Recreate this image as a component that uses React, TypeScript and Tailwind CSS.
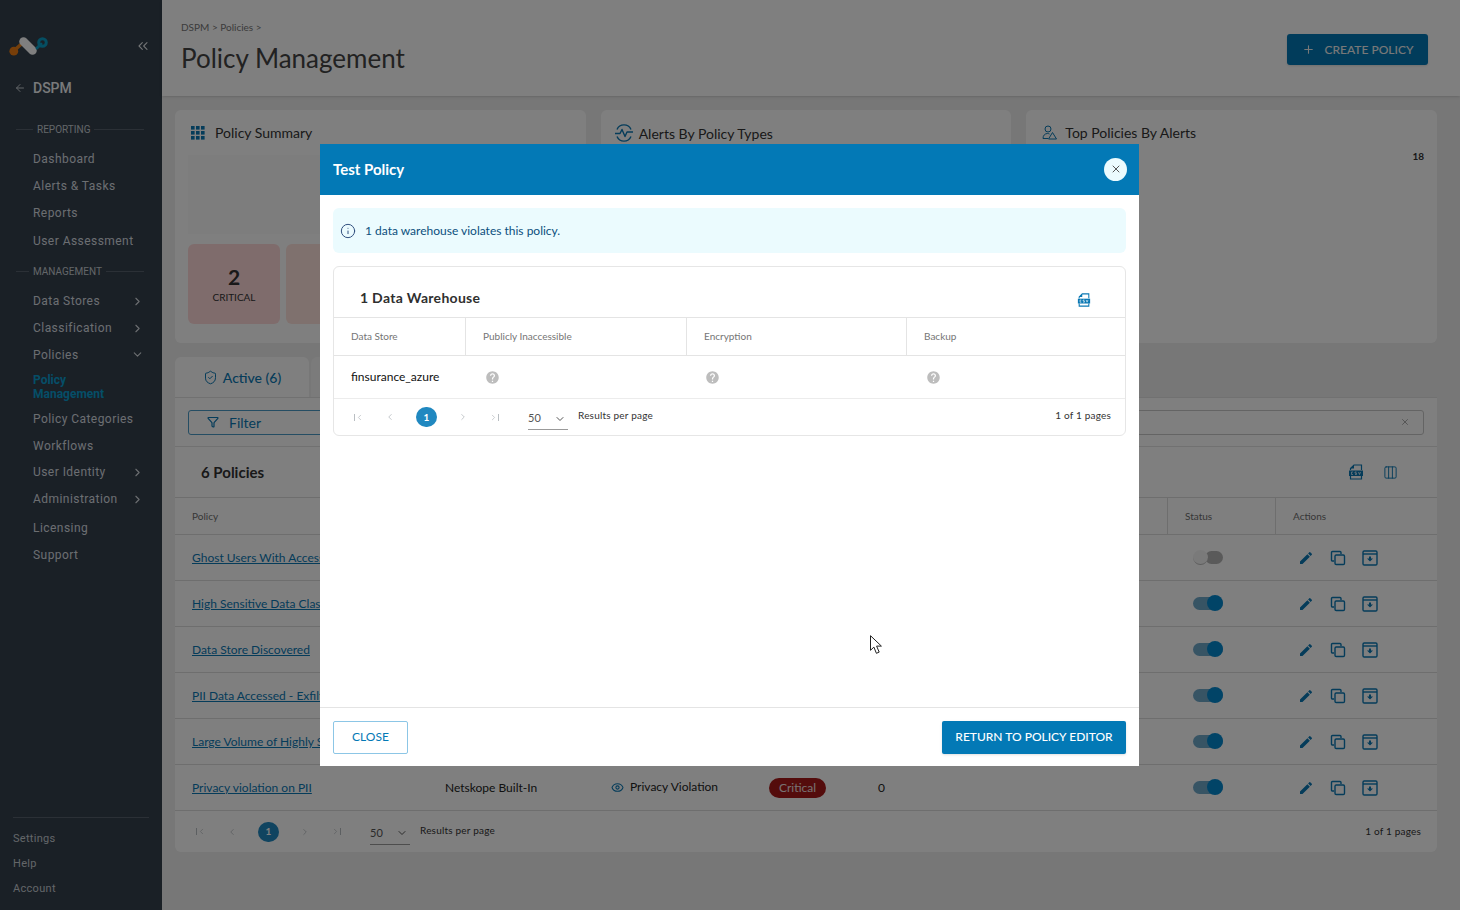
import { ArrowLeft, ChevronDown, ChevronLeft, ChevronRight, ChevronsLeft, Columns3, Eye, Filter, Info, Plus, ShieldCheck, X } from 'lucide-react'
import { MdEdit, MdHelp } from 'react-icons/md'

const policies = [
  { name: 'Ghost Users With Access to Sensitive Data', on: false, type: 'Access Violation', severity: 'High', alerts: '0' },
  { name: 'High Sensitive Data Classified in Public Store', on: true, type: 'Data Exposure', severity: 'High', alerts: '0' },
  { name: 'Data Store Discovered', on: true, type: 'Discovery', severity: 'Low', alerts: '0' },
  { name: 'PII Data Accessed - Exfiltration Risk', on: true, type: 'Exfiltration', severity: 'Critical', alerts: '0' },
  { name: 'Large Volume of Highly Sensitive Data', on: true, type: 'Data Exposure', severity: 'High', alerts: '0' },
  { name: 'Privacy violation on PII', on: true, type: 'Privacy Violation', severity: 'Critical', alerts: '0' },
]

function Logo() {
  return (
    <svg width="40" height="24" viewBox="0 0 40 24" fill="none">
      <path d="M4 17.5 L13 9.5" stroke="#e8801a" strokeWidth="3.5" strokeLinecap="round" />
      <circle cx="4.8" cy="17.2" r="4.4" fill="#ef7d12" />
      <path d="M14.5 7.5 L23.5 16.5" stroke="#ffffff" strokeWidth="8.5" strokeLinecap="round" />
      <path d="M28 14 L32 10" stroke="#0a9cc4" strokeWidth="3" strokeLinecap="round" />
      <circle cx="33.5" cy="8.5" r="3.8" stroke="#0a9cc4" strokeWidth="3" />
    </svg>
  )
}

function NavItem({ label, icon }: { label: string; icon?: 'right' | 'down' }) {
  return (
    <div className="flex h-[27px] shrink-0 items-center justify-between pl-[33px] pr-[18px] text-[12px] tracking-[0.45px] text-[#d8dde2]">
      <span>{label}</span>
      {icon === 'right' && <ChevronRight className="mt-[2px] h-[13px] w-[13px]" />}
      {icon === 'down' && <ChevronDown className="h-[13px] w-[13px]" />}
    </div>
  )
}

function NavHeading({ label, left, className }: { label: string; left: string; className: string }) {
  return (
    <div className={`flex h-[12px] shrink-0 items-center pl-[16px] pr-[18px] text-[10px] text-[#c6ccd2] ${className}`}>
      <span className={`h-px bg-[#56606c] ${left}`} />
      <span className="px-[4px]">{label}</span>
      <span className="h-px flex-1 bg-[#56606c]" />
    </div>
  )
}

function Sidebar() {
  return (
    <aside className="flex h-full w-[162px] shrink-0 flex-col bg-[#34404c] pt-[34px] pb-[9px] font-['Roboto',sans-serif]">
      <div className="flex h-[24px] shrink-0 items-center justify-between pl-[9px] pr-[11px]">
        <Logo />
        <ChevronsLeft className="h-[16px] w-[16px] text-[#e5e8eb]" strokeWidth={1.6} />
      </div>
      <div className="mt-[20px] flex h-[20px] shrink-0 items-center gap-[7px] pl-[14px] text-[14px] font-medium text-[#f2f4f6]">
        <ArrowLeft className="h-[12px] w-[12px] text-[#c6ccd2]" />
        <span>DSPM</span>
      </div>
      <NavHeading label="REPORTING" left="w-[17px]" className="mt-[25px]" />
      <div className="mt-[10px]">
        <NavItem label="Dashboard" />
        <NavItem label="Alerts & Tasks" />
        <NavItem label="Reports" />
        <div className="mt-px">
          <NavItem label="User Assessment" />
        </div>
      </div>
      <NavHeading label="MANAGEMENT" left="w-[13px]" className="mt-[11px]" />
      <div className="mt-[10px]">
        <NavItem label="Data Stores" icon="right" />
        <NavItem label="Classification" icon="right" />
        <NavItem label="Policies" icon="down" />
      </div>
      <div className="mt-[5px] w-[100px] pl-[33px] text-[12px] leading-[14px] font-bold text-[#0a9ccf]">Policy Management</div>
      <div className="mt-[4px]">
        <NavItem label="Policy Categories" />
        <NavItem label="Workflows" />
      </div>
      <div className="-mt-px">
        <NavItem label="User Identity" icon="right" />
        <NavItem label="Administration" icon="right" />
      </div>
      <div className="mt-[2px]">
        <NavItem label="Licensing" />
        <NavItem label="Support" />
      </div>
      <div className="mx-[13px] mt-auto h-px bg-[#56606c]" />
      <div className="mt-[9px] flex flex-col gap-px pl-[13px] text-[11px] tracking-[0.3px] text-[#c6ccd2]">
        <div className="flex h-[24px] items-center">Settings</div>
        <div className="flex h-[24px] items-center">Help</div>
        <div className="flex h-[24px] items-center">Account</div>
      </div>
    </aside>
  )
}

function GridIcon() {
  return (
    <svg width="14" height="14" viewBox="0 0 14 14" fill="#0a78b4">
      {[0, 5, 10].map((y) =>
        [0, 5, 10].map((x) => <rect key={`${x}-${y}`} x={x} y={y} width="3.6" height="3.6" />)
      )}
    </svg>
  )
}

function PulseIcon() {
  return (
    <svg width="20" height="18" viewBox="0 0 20 18" fill="none" stroke="#0a78b4" strokeWidth="1.4">
      <path d="M3 5.5A7.6 7.6 0 0 1 17 5.5M3 12.5A7.6 7.6 0 0 0 17 12.5" />
      <path d="M1 9.5h5l2-4 3 7 2-4.5h6" strokeLinejoin="round" />
    </svg>
  )
}

function AlertUserIcon() {
  return (
    <svg width="15" height="15" viewBox="0 0 15 15" fill="none" stroke="#0a78b4" strokeWidth="1">
      <circle cx="6" cy="4" r="3" />
      <path d="M1 13.5c0-3.2 2-5 4.5-5 .8 0 1.4.2 2 .5M1 13.5h5" />
      <path d="M10.5 7.5l4 6.5h-8z" strokeLinejoin="round" />
    </svg>
  )
}

function CsvIcon({ size = 16 }: { size?: number }) {
  return (
    <svg width={size} height={size} viewBox="0 0 16 16" fill="none">
      <path d="M2.5 6V4.5L6 1h7.5v5M2.5 12v3h11v-3" stroke="#0a78b4" strokeWidth="1.2" />
      <path d="M2 4.5h4V1z" fill="#0a78b4" />
      <rect x="1" y="6.5" width="14" height="5.5" fill="#0a78b4" />
      <path d="M5 8h-1.5v2.5H5M8.5 8H7v1.2h1.5v1.3H7M10.5 8l1 2.5 1-2.5" stroke="#ffffff" strokeWidth=".7" />
    </svg>
  )
}

function CopyIcon() {
  return (
    <svg width="16" height="16" viewBox="0 0 16 16" fill="none" stroke="#0a78b4" strokeWidth="1.4">
      <path d="M4 11H2.5a1 1 0 0 1-1-1V2.5a1 1 0 0 1 1-1H10a1 1 0 0 1 1 1V4" />
      <rect x="5" y="5" width="9.5" height="9.5" rx="1.2" />
    </svg>
  )
}

function ArchiveIcon() {
  return (
    <svg width="16" height="16" viewBox="0 0 16 16" fill="none" stroke="#0a78b4" strokeWidth="1.4">
      <rect x="1" y="1" width="14" height="14" rx="1.2" />
      <path d="M1 4h14" />
      <path d="M5 8.5h2V6.5h2v2h2L8 11.5z" fill="#0a78b4" stroke="none" />
    </svg>
  )
}

function Toggle({ on }: { on: boolean }) {
  if (!on) {
    return (
      <div className="relative h-[13px] w-[30px]">
        <div className="absolute top-0 right-0 h-[13px] w-[18px] rounded-full bg-[#b4b4b4]" />
        <div className="absolute top-[-1px] left-0 h-[15px] w-[15px] rounded-full border-b border-[#bbbbbb] bg-[#f4f4f4]" />
      </div>
    )
  }
  return (
    <div className="relative h-[13px] w-[30px] rounded-full bg-[#6fa8c9]">
      <div className="absolute top-[-2px] right-0 h-[16px] w-[16px] rounded-full bg-[#0288cf]" />
    </div>
  )
}

function Pager({ gap }: { gap: string }) {
  return (
    <div className="flex items-center text-[#b9bec2]">
      <div className={`flex items-center ${gap}`}>
        <span className="flex w-[10px] items-center justify-center">
          <span className="h-[7px] w-px bg-[#b9bec2]" />
          <ChevronLeft className="h-[9px] w-[9px]" />
        </span>
        <ChevronLeft className="h-[10px] w-[10px]" />
        <span className="flex h-[20px] w-[21px] items-center justify-center rounded-full bg-[#2088c0] text-[10px] font-bold text-white">1</span>
        <ChevronRight className="h-[10px] w-[10px]" />
        <span className="flex w-[10px] items-center justify-center">
          <ChevronRight className="h-[9px] w-[9px]" />
          <span className="h-[7px] w-px bg-[#b9bec2]" />
        </span>
      </div>
    </div>
  )
}

function PageSize() {
  return (
    <>
      <div className="ml-[29px] flex h-[26px] w-[40px] items-center justify-between border-b border-[#9a9a9a] pt-[4px] text-[11px] text-[#555555]">
        <span>50</span>
        <ChevronDown className="mr-[2px] h-[12px] w-[12px]" />
      </div>
      <span className="ml-[10px] mb-[3px] text-[10px] tracking-[0.2px] text-[#333333]">Results per page</span>
    </>
  )
}

function PolicyTable() {
  return (
    <div>
      <div className="flex h-[38px] border-y border-[#dddddd] text-[10px] text-[#6e6e6e]">
        <div className="flex w-[253px] items-center pl-[17px]">Policy</div>
        <div className="flex w-[183px] items-center border-l border-[#dddddd] pl-[17px]">Type</div>
        <div className="flex w-[141px] items-center border-l border-[#dddddd] pl-[17px]">Policy Type</div>
        <div className="flex w-[109px] items-center border-l border-[#dddddd] pl-[17px]">Severity</div>
        <div className="flex flex-1 items-center border-l border-[#dddddd] pl-[17px]">Alerts</div>
        <div className="flex w-[108px] items-center border-l border-[#dddddd] pl-[17px]">Status</div>
        <div className="flex w-[162px] items-center border-l border-[#dddddd] pl-[17px]">Actions</div>
      </div>
      {policies.map((policy) => (
        <div key={policy.name} className="flex h-[46px] items-center border-b border-[#dddddd] text-[12px]">
          <div className="w-[253px] truncate pl-[17px] text-[#0a78b4] underline">{policy.name}</div>
          <div className="w-[183px] pl-[17px] text-[#222222]">Netskope Built-In</div>
          <div className="flex w-[141px] items-center gap-[6px] text-[#222222]">
            <Eye className="h-[13px] w-[13px] text-[#0a78b4]" />
            <span className="mb-[2px]">{policy.type}</span>
          </div>
          <div className="w-[109px] pl-[17px]">
            <span className="inline-block rounded-full bg-[#a81818] px-[10px] py-[1px] text-[#f0e2e2]">{policy.severity}</span>
          </div>
          <div className="flex-1 pl-[17px] text-[#222222]">{policy.alerts}</div>
          <div className="flex w-[108px] pl-[26px]">
            <Toggle on={policy.on} />
          </div>
          <div className="flex w-[162px] items-center gap-[16px] pl-[23px]">
            <MdEdit className="h-[16px] w-[16px] text-[#0a78b4]" />
            <CopyIcon />
            <ArchiveIcon />
          </div>
        </div>
      ))}
    </div>
  )
}

function Main() {
  return (
    <main className="flex h-full flex-1 flex-col bg-[#eeeeee] font-['Lato',sans-serif]">
      <header className="relative flex h-[96px] shrink-0 items-start justify-between bg-white pl-[19px] pr-[32px] shadow-sm">
        <div>
          <div className="mt-[21px] text-[10px] leading-[12px] text-[#777777]">DSPM &gt; Policies &gt;</div>
          <h1 className="mt-[9px] text-[26px] leading-[32px] text-[#444444]">Policy Management</h1>
        </div>
        <button className="mt-[34px] flex h-[31px] w-[141px] items-center justify-center gap-[10px] rounded-[3px] bg-[#0279b6] text-[12px] font-medium text-[#f0f0f0] shadow">
          <Plus className="h-[13px] w-[13px]" />
          CREATE POLICY
        </button>
      </header>
      <div className="flex flex-1 flex-col pl-[13px] pr-[23px] pt-[14px]">
        <section className="flex h-[233px] shrink-0 gap-[15px]">
          <div className="flex-1 rounded-[6px] bg-white px-[13px] pt-[14px]">
            <div className="flex items-center gap-[10px] text-[14px] leading-[17px] text-[#333333]">
              <span className="ml-[3px]"><GridIcon /></span>
              Policy Summary
            </div>
            <div className="mt-[14px] h-[79px] bg-[#fbfbfb]" />
            <div className="mt-[10px] flex gap-[6px]">
              <div className="flex h-[80px] w-[92px] flex-col items-center justify-center rounded-[6px] bg-[#ffd9d9]">
                <span className="text-[21px] leading-[26px] font-bold text-[#333333]">2</span>
                <span className="text-[10px] leading-[14px] text-[#333333]">CRITICAL</span>
              </div>
              <div className="h-[80px] w-[92px] rounded-[6px] bg-[#ffe2dc]" />
            </div>
          </div>
          <div className="flex-1 rounded-[6px] bg-white px-[13px] pt-[14px]">
            <div className="flex items-center gap-[5px] text-[14px] leading-[17px] text-[#333333]">
              <PulseIcon />
              Alerts By Policy Types
            </div>
          </div>
          <div className="flex-1 rounded-[6px] bg-white px-[13px] pt-[14px]">
            <div className="flex items-center gap-[8px] pl-[3px] text-[14px] leading-[17px] text-[#333333]">
              <AlertUserIcon />
              Top Policies By Alerts
            </div>
            <div className="mt-[8px] text-right text-[10px] font-bold text-[#333333]">18</div>
          </div>
        </section>
        <div className="mt-[14px] flex h-[40px] shrink-0 gap-[2px]">
          <div className="flex w-[134px] items-center justify-center gap-[5px] rounded-t-[6px] bg-white text-[14px] font-medium text-[#0a78b4]">
            <ShieldCheck className="h-[15px] w-[15px]" strokeWidth={1.6} />
            Active (6)
          </div>
          <div className="w-[134px] rounded-t-[6px] bg-[#f6f6f6]" />
        </div>
        <section className="rounded-b-[6px] bg-white">
          <div className="flex h-[50px] items-center gap-[8px] border-y border-[#e2e2e2] px-[13px]">
            <div className="flex h-[25px] w-[150px] items-center gap-[10px] rounded-[3px] border border-[#4b9ac6] pl-[18px] text-[14px] text-[#0a78b4]">
              <Filter className="h-[12px] w-[12px]" strokeWidth={2.4} />
              Filter
            </div>
            <div className="flex h-[25px] flex-1 items-center justify-end rounded-[3px] border border-[#c8c8c8] pr-[13px]">
              <X className="h-[10px] w-[10px] text-[#9a9a9a]" />
            </div>
          </div>
          <div className="flex h-[50px] items-center justify-between pl-[26px] pr-[39px]">
            <span className="text-[15px] leading-[18px] font-bold text-[#333333]">6 Policies</span>
            <div className="flex items-center gap-[19px]">
              <CsvIcon />
              <Columns3 className="h-[15px] w-[15px] text-[#0a78b4]" strokeWidth={1.5} />
            </div>
          </div>
          <PolicyTable />
          <div className="flex h-[41px] items-center justify-between pl-[21px] pr-[16px]">
            <div className="flex items-center">
              <Pager gap="gap-[21px]" />
              <PageSize />
            </div>
            <span className="text-[10px] tracking-[0.2px] text-[#333333]">1 of 1 pages</span>
          </div>
        </section>
      </div>
    </main>
  )
}

function ModalQuestion() {
  return <MdHelp className="h-[15px] w-[15px] text-[#bdbdbd]" />
}

function TestPolicyModal() {
  return (
    <div className="absolute top-[144px] left-[320px] flex h-[622px] w-[819px] flex-col bg-white font-['Lato',sans-serif]">
      <div className="flex h-[51px] shrink-0 items-center justify-between bg-[#0379b6] pl-[13px] pr-[12px]">
        <span className="text-[15px] font-bold text-white">Test Policy</span>
        <button className="flex h-[23px] w-[23px] items-center justify-center rounded-full bg-[#ebfbfe]">
          <X className="mb-[1px] h-[12px] w-[12px] text-[#555555]" />
        </button>
      </div>
      <div className="flex flex-1 flex-col px-[13px] pt-[13px]">
        <div className="flex h-[45px] items-center gap-[9px] rounded-[6px] bg-[#ebfbfe] pl-[7px] text-[12px] text-[#0b4f7d]">
          <Info className="h-[16px] w-[16px] text-[#31507f]" strokeWidth={1.5} />
          1 data warehouse violates this policy.
        </div>
        <div className="mt-[13px] rounded-[6px] border border-[#e6e6e6]">
          <div className="flex h-[50px] items-end justify-between pl-[26px] pr-[34px] pb-[10px]">
            <span className="text-[14px] leading-[18px] font-bold tracking-[0.3px] text-[#2f2f2f]">1 Data Warehouse</span>
            <CsvIcon size={14} />
          </div>
          <div className="flex h-[39px] border-y border-[#e4e4e4] text-[10px] text-[#757575]">
            <div className="flex w-[131px] items-center pl-[17px]">Data Store</div>
            <div className="flex w-[221px] items-center border-l border-[#e4e4e4] pl-[17px]">Publicly Inaccessible</div>
            <div className="flex w-[220px] items-center border-l border-[#e4e4e4] pl-[17px]">Encryption</div>
            <div className="flex flex-1 items-center border-l border-[#e4e4e4] pl-[17px]">Backup</div>
          </div>
          <div className="flex h-[43px] items-center border-b border-[#ececec] text-[12px] text-[#111111]">
            <div className="w-[131px] pl-[17px]">finsurance_azure</div>
            <div className="w-[221px] pl-[20px]"><ModalQuestion /></div>
            <div className="w-[220px] pl-[19px]"><ModalQuestion /></div>
            <div className="flex-1 pl-[20px]"><ModalQuestion /></div>
          </div>
          <div className="flex h-[36px] items-center justify-between pl-[20px] pr-[14px]">
            <div className="flex items-center">
              <Pager gap="gap-[21px]" />
              <PageSize />
            </div>
            <span className="mb-[4px] text-[10px] tracking-[0.2px] text-[#333333]">1 of 1 pages</span>
          </div>
        </div>
      </div>
      <div className="flex h-[59px] shrink-0 items-center justify-between border-t border-[#e4e4e4] pl-[13px] pr-[13px]">
        <button className="flex h-[33px] w-[75px] items-center justify-center rounded-[2px] border border-[#8cc6e6] text-[12px] text-[#0379b6]">CLOSE</button>
        <button className="flex h-[33px] w-[184px] items-center justify-center rounded-[2px] bg-[#0379b6] text-[12px] font-medium text-white shadow">RETURN TO POLICY EDITOR</button>
      </div>
    </div>
  )
}

function Cursor() {
  return (
    <svg className="absolute top-[635px] left-[870px]" width="13" height="20" viewBox="0 0 13 20">
      <path d="M.5.7v14.6l3.4-3.2 2.5 6.2 2.8-1.2-2.6-6h4.8z" fill="#ffffff" stroke="#222222" strokeWidth="1" strokeLinejoin="round" />
    </svg>
  )
}

export default function App() {
  return (
    <div className="relative flex h-[910px] w-[1460px] overflow-hidden">
      <Sidebar />
      <Main />
      <div className="absolute inset-0 bg-black/50" />
      <TestPolicyModal />
      <Cursor />
    </div>
  )
}
